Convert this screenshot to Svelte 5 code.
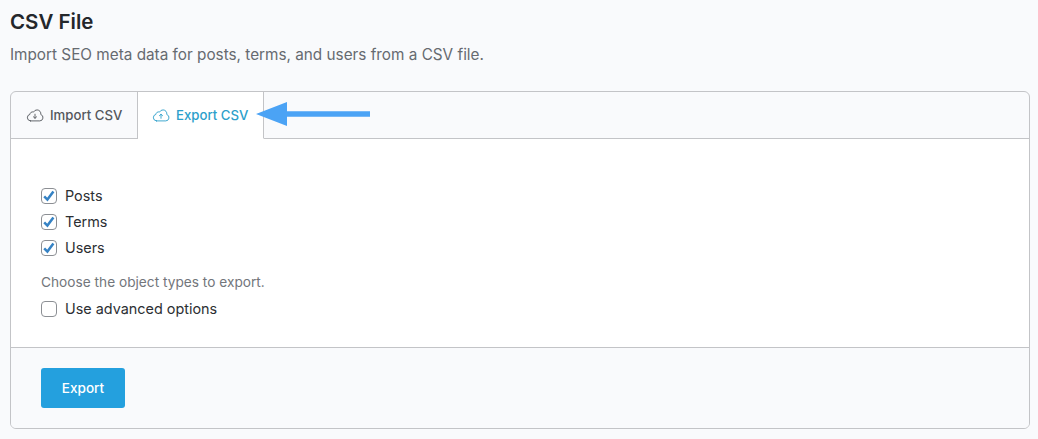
<script lang="ts">
	const objectTypes = ['Posts', 'Terms', 'Users'];
	let activeTab = $state('export');
</script>

<main class="page">
	<h2>CSV File</h2>
	<p class="intro">Import SEO meta data for posts, terms, and users from a CSV file.</p>

	<section class="card">
		<div class="tabs">
			<button class="tab first" class:active={activeTab === 'import'} onclick={() => (activeTab = 'import')}>
				<svg viewBox="0 0 18 14" width="18" height="14" fill="none" stroke="currentColor" stroke-width="0.9" stroke-linecap="round" stroke-linejoin="round">
					<path d="M4.4 12.9h9.4a3.3 3.3 0 0 0 1-6.4 3.9 3.9 0 0 0-3.7-4.6 4 4 0 0 0-3.6 2.2 2.6 2.6 0 0 0-3.6 2.3 3.3 3.3 0 0 0 .5 6.5z" />
					<path d="M9 6.2v4M7.4 8.8 9 10.3l1.6-1.5" />
				</svg>
				Import CSV
			</button>
			<button class="tab second" class:active={activeTab === 'export'} onclick={() => (activeTab = 'export')}>
				<svg viewBox="0 0 18 14" width="18" height="14" fill="none" stroke="currentColor" stroke-width="0.9" stroke-linecap="round" stroke-linejoin="round">
					<path d="M4.4 12.9h9.4a3.3 3.3 0 0 0 1-6.4 3.9 3.9 0 0 0-3.7-4.6 4 4 0 0 0-3.6 2.2 2.6 2.6 0 0 0-3.6 2.3 3.3 3.3 0 0 0 .5 6.5z" />
					<path d="M9 10.3v-4M7.4 7.7 9 6.2l1.6 1.5" />
				</svg>
				Export CSV
			</button>
			<svg class="arrow" viewBox="0 0 114 24" width="114" height="24">
				<path d="M0 12 31 0v9.2h83v5.6H31V24z" fill="#4ba3f5" />
			</svg>
		</div>

		<div class="body">
			<div class="checks">
				{#each objectTypes as type}
					<label class="check">
						<input type="checkbox" checked />
						<span class="box">
							<svg viewBox="0 0 16 16" width="16" height="16">
								<path d="M3.2 8.4 6.4 11.6 12.4 3.6" fill="none" stroke="#3582c4" stroke-width="2.5" />
							</svg>
						</span>
						{type}
					</label>
				{/each}
			</div>
			<p class="hint">Choose the object types to export.</p>
			<label class="check">
				<input type="checkbox" />
				<span class="box"></span>
				Use advanced options
			</label>
		</div>

		<div class="footer">
			<button class="export">Export</button>
		</div>
	</section>
</main>

<style>
	:global(body) {
		background: #f9fafc;
		font-family: Inter, 'Liberation Sans', sans-serif;
		color: #2c2f33;
	}

	.page {
		padding: 10px 8px 10px 10px;
	}

	h2 {
		margin: 0;
		font-size: 20.5px;
		line-height: 24px;
		font-weight: 600;
		color: #24272b;
	}

	.intro {
		margin: 10px 0 0;
		font-size: 15.3px;
		line-height: 22px;
		color: #666a70;
	}

	.card {
		margin-top: 25px;
		border: 1px solid #c3c4c7;
		border-radius: 6px;
		overflow: hidden;
	}

	.tabs {
		display: flex;
		align-items: flex-end;
		height: 46px;
		border-bottom: 1px solid #c3c4c7;
		position: relative;
	}

	.tab {
		display: flex;
		align-items: center;
		gap: 6px;
		height: 47px;
		margin-bottom: -1px;
		padding: 0;
		border: 0;
		border-right: 1px solid #c3c4c7;
		border-bottom: 1px solid #c3c4c7;
		background: transparent;
		font: 500 13.2px Inter, 'Liberation Sans', sans-serif;
		color: #54575c;
		box-sizing: border-box;
	}

	.tab.first {
		width: 127px;
		padding-left: 15px;
	}

	.tab.second {
		width: 126px;
		padding-left: 14px;
	}

	.tab.active {
		background: #fff;
		border-bottom-color: #fff;
		color: #2c9fcb;
	}

	.arrow {
		position: absolute;
		left: 245px;
		top: 10px;
	}

	.body {
		background: #fff;
		padding: 47px 30px 26px;
		height: 209px;
		box-sizing: border-box;
		border-bottom: 1px solid #c3c4c7;
	}

	.checks {
		display: flex;
		flex-direction: column;
		gap: 6px;
	}

	.check {
		display: flex;
		align-items: center;
		gap: 8px;
		height: 20px;
		font-size: 14.4px;
		line-height: 20px;
		color: #2c2f33;
	}

	.check input {
		display: none;
	}

	.box {
		display: flex;
		flex: none;
		align-items: center;
		justify-content: center;
		width: 16px;
		height: 16px;
		box-sizing: border-box;
		border: 1px solid #8c8f94;
		border-radius: 4px;
		background: #fff;
	}

	.box svg {
		flex: none;
	}

	.hint {
		margin: 14px 0 7px;
		font-size: 13.7px;
		line-height: 20px;
		color: #72767b;
	}

	.footer {
		background: #f9fafc;
		padding: 20px 30px 20px;
	}

	.export {
		display: block;
		width: 84px;
		height: 40px;
		border: 0;
		border-radius: 3px;
		background: #24a0de;
		color: #fff;
		font: 500 13.6px Inter, 'Liberation Sans', sans-serif;
	}
</style>
